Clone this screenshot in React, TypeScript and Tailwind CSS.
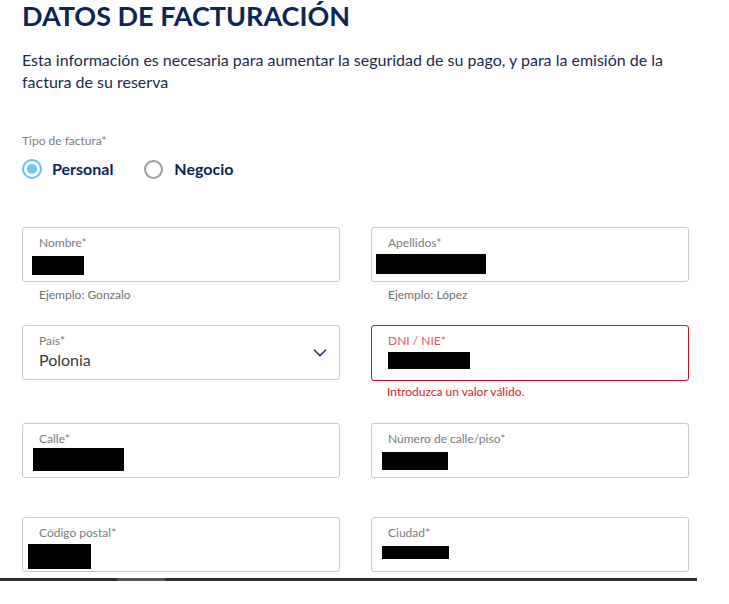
import { ChevronDown } from "lucide-react";

type Field = {
  label: string;
  helper?: string;
  error?: string;
  invalid?: boolean;
  value?: string;
  select?: boolean;
  mask?: string;
};

const rows: Array<{ wrap: string; fields: Field[] }> = [
  {
    wrap: "h-[98px]",
    fields: [
      { label: "Nombre*", helper: "Ejemplo: Gonzalo", mask: "left-[9px] top-[28px] w-[52px] h-[19px]" },
      { label: "Apellidos*", helper: "Ejemplo: López", mask: "left-[4px] top-[26px] w-[110px] h-[20px]" },
    ],
  },
  {
    wrap: "h-[98px]",
    fields: [
      { label: "País*", value: "Polonia", select: true },
      {
        label: "DNI / NIE*",
        invalid: true,
        error: "Introduzca un valor válido.",
        mask: "left-[16px] top-[26px] w-[82px] h-[17px]",
      },
    ],
  },
  {
    wrap: "h-[94px]",
    fields: [
      { label: "Calle*", mask: "left-[10px] top-[24px] w-[91px] h-[23px]" },
      { label: "Número de calle/piso*", mask: "left-[10px] top-[28px] w-[66px] h-[18px]" },
    ],
  },
  {
    wrap: "",
    fields: [
      { label: "Código postal*", mask: "left-[5px] top-[26px] w-[63px] h-[25px]" },
      { label: "Ciudad*", mask: "left-[10px] top-[28px] w-[67px] h-[13px]" },
    ],
  },
];

function FormField({ field }: { field: Field }) {
  return (
    <div className="w-[318px]">
      <div
        className={
          field.invalid
            ? "relative h-[56px] rounded-[3px] border border-[#d0111b] bg-white"
            : "relative h-[55px] rounded-[3px] border border-[#c9c9c9] bg-white"
        }
      >
        <div
          className={
            field.invalid
              ? "pl-[16px] pt-[8px] text-[12px] leading-[14px] text-[#e0566a]"
              : "pl-[16px] pt-[8px] text-[12px] leading-[14px] text-[#7b7b7b]"
          }
        >
          {field.label}
        </div>
        {field.value && (
          <div className="mt-[2px] pl-[16px] text-[16px] leading-[20px] text-[#3a3a3a]">{field.value}</div>
        )}
        {field.select && (
          <ChevronDown
            className="absolute right-[8px] top-[16px] h-[22px] w-[22px] text-[#1b3566]"
            strokeWidth={1.8}
          />
        )}
        {field.mask && <div className={`absolute bg-black ${field.mask}`} />}
      </div>
      {field.helper && (
        <div className="mt-[6px] pl-[17px] text-[12px] leading-[14px] text-[#6f6f6f]">{field.helper}</div>
      )}
      {field.error && (
        <div className="mt-[4px] pl-[16px] text-[12px] leading-[14px] text-[#d4202f]">{field.error}</div>
      )}
    </div>
  );
}

export default function App() {
  return (
    <div className="min-h-[604px] w-[729px] bg-white font-['Lato',sans-serif]">
      <div className="px-[22px]">
        <h1 className="text-[27px] font-bold leading-[1.2] text-[#0c2657]">DATOS DE FACTURACIÓN</h1>
        <p className="mt-[17px] w-[660px] text-[16px] leading-[22px] text-[#1b2b4d]">
          Esta información es necesaria para aumentar la seguridad de su pago, y para la emisión de la factura de su
          reserva
        </p>

        <div className="mt-[41px] text-[12px] leading-[14px] text-[#7b7b7b]">Tipo de factura*</div>
        <div className="mt-[11px] flex h-[20px] items-center">
          <span className="flex h-[20px] w-[20px] items-center justify-center rounded-full border-2 border-[#62c3f3]">
            <span className="h-[10px] w-[10px] rounded-full bg-[#6cc8f6]" />
          </span>
          <span className="ml-[10px] text-[16px] font-bold text-[#0c2657]">Personal</span>
          <span className="ml-[31px] h-[19px] w-[19px] rounded-full border-2 border-[#9c9c9c]" />
          <span className="ml-[11px] text-[16px] font-bold text-[#0c2657]">Negocio</span>
        </div>

        <div className="mt-[48px]">
          {rows.map((row, i) => (
            <div key={i} className={`flex gap-[31px] ${row.wrap}`}>
              {row.fields.map((f) => (
                <FormField key={f.label} field={f} />
              ))}
            </div>
          ))}
        </div>
      </div>

      <div className="mt-[6px] flex h-[3px] w-[697px] bg-[#2f2f2f]">
        <div className="ml-[117px] h-[3px] w-[48px] bg-[#555]" />
      </div>
    </div>
  );
}
